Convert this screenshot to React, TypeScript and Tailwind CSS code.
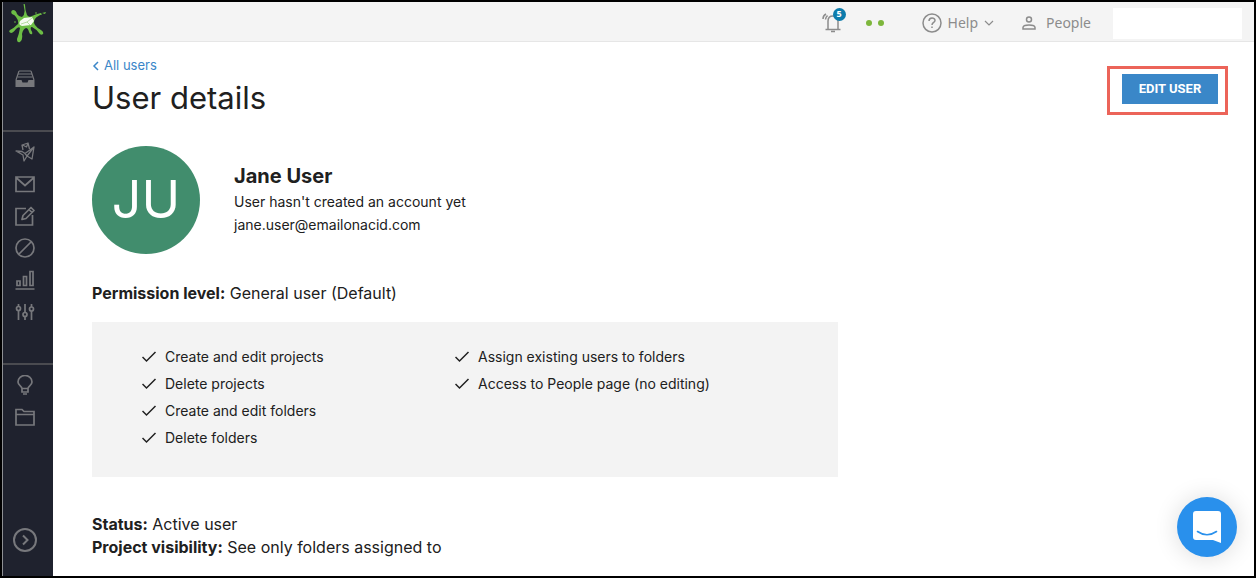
import React from 'react';

const generalPermissions = [
  'Create and edit projects',
  'Delete projects',
  'Create and edit folders',
  'Delete folders',
];

const peoplePermissions = [
  'Assign existing users to folders',
  'Access to People page (no editing)',
];

const Logo = () => (
  <svg viewBox="0 0 40 42" className="h-[42px] w-10" fill="#6cbd45" aria-hidden="true">
    <path d="M16.5 0 Q17.5 -1 18 1 Q18 6 20 11 Q22 14 25 12 Q29 10 34 9 L35 10.5 Q30 12 28 15 Q26 18 28 21 Q30 24 34 26 Q37 28 36 30 Q34 32 32 29 Q29 25 25 23 Q23 23 24 26 Q26 29 25 30 Q23 31 22 28 Q21 24 19 24 Q16 25 15 30 Q16 36 13 38 Q10 39 10 35 Q12 30 13 24 Q12 22 9 25 Q6 29 4 29 Q1 28 3 26 Q7 24 11 20 Q12 17 9 13 Q8 11 5 10 Q3 7 6 6 Q9 6 10 10 Q12 13 15 13 Q18 11 17.5 6 Z" />
    <path d="M35 9 L39 8 L38 10 Z" />
    <circle cx="29" cy="9" r="0.8" />
    <circle cx="8" cy="18" r="0.8" />
    <path d="M13 17 L17 14 L25 13 L27 17 L24 21 L15 22 Q11 21 13 17Z" fill="#f4fbef" />
    <path d="M14 20 L20 18 L25 14 M20 18 L23 21" fill="none" stroke="#a5d68c" strokeWidth="0.8" />
  </svg>
);

const Icon = ({ children }: { children: React.ReactNode }) => (
  <svg
    viewBox="0 0 20 20"
    className="h-5 w-5"
    fill="none"
    stroke="currentColor"
    strokeWidth="1.7"
    aria-hidden="true"
  >
    {children}
  </svg>
);

const NavItem = ({ label, children }: { label: string; children: React.ReactNode }) => (
  <a href="#" aria-label={label} className="flex h-8 items-center justify-center pr-1.5">
    <Icon>{children}</Icon>
  </a>
);

const Sidebar = () => (
  <nav aria-label="Main" className="flex w-[51px] shrink-0 flex-col border-l border-[#8e9094] bg-[#1f222e] text-[#77787c]">
    <a href="#" aria-label="Home" className="flex h-[46px] items-center pl-1">
      <Logo />
    </a>
    <div className="h-[84px] border-b-2 border-[#4a4b50] pt-[15px]">
      <NavItem label="Inbox">
        <path d="M4 2h12M3 5h14M2.5 8h15" strokeWidth="1.2" />
        <path d="M4 2L1 11M16 2l3 9" strokeWidth="1.2" />
        <path d="M0.5 11h6l1 2.5h5l1-2.5h6v7h-19z" fill="currentColor" stroke="none" />
      </NavItem>
    </div>
    <div className="border-b-2 border-[#4a4b50] pt-1 pb-[35px]">
      <NavItem label="Campaigns">
        <path d="M8 8L7 3l6-2 1.5 6M7.500 3l4 2 1.500-4M1 9l6 .5 3 2L19 5l-2 12-5-3-3 5-1-6zM10 11.500l2 2.500L19 5" strokeLinejoin="round" strokeWidth="1.3" />
      </NavItem>
      <NavItem label="Email">
        <path d="M1 3h18v14.500H1zM1 3.500l9 8 9-8" />
      </NavItem>
      <NavItem label="Editor">
        <path d="M11 2.500H1v16.500h16.500V9" />
        <path d="M7 13.500l1-4L16 1.500l3 3-8 8zM14 3.500l3 3" strokeLinejoin="round" />
      </NavItem>
      <NavItem label="Blocklist">
        <circle cx="10" cy="10" r="9" />
        <path d="M4 16L16 4" />
      </NavItem>
      <NavItem label="Analytics">
        <path d="M2 11h3v4.500H2zM8.500 6.500h3v9h-3zM15 1.500h3v14h-3zM0.500 19h19" />
      </NavItem>
      <NavItem label="Settings">
        <path d="M3.500 2v2.500M3.500 8.500V18M10 2v8.500M10 14.500V18M16.500 2v3M16.500 9v9" />
        <circle cx="3.500" cy="6.500" r="2" />
        <circle cx="10" cy="12.500" r="2" />
        <circle cx="16.500" cy="7" r="2" />
      </NavItem>
    </div>
    <div className="pt-1">
      <NavItem label="Tips">
        <path d="M7 13.500C7 11 3 10.500 3 7a7 6.500 0 0 1 14 0C17 10.500 13 11 13 13.500zM7 13.500V17h6v-3.500M8 19h4" />
      </NavItem>
      <NavItem label="Folders">
        <path d="M1 18V2.500h6l2 2h10V18zM1 7.500h18" />
      </NavItem>
    </div>
    <button type="button" aria-label="Expand menu" className="mt-auto mb-6 flex justify-center pr-1.5">
      <svg viewBox="0 0 24 24" className="h-6 w-6" fill="none" stroke="currentColor" strokeWidth="2" aria-hidden="true">
        <circle cx="12" cy="12" r="11" />
        <path d="M10 7.500l4.500 4.500-4.500 4.500" />
      </svg>
    </button>
  </nav>
);

const Header = () => (
  <header className="flex h-10 items-center justify-end border-b border-[#e6e6e6] bg-[#f4f4f4] pt-[3px] pr-3 font-['Noto_Sans',sans-serif] text-sm text-[#8c8c8c]">
    <button type="button" aria-label="Notifications" className="relative mr-5">
      <svg viewBox="0 0 24 22" className="h-[22px] w-6" fill="none" stroke="currentColor" strokeWidth="1.5" aria-hidden="true">
        <path d="M3.500 17.500h15M6 17V9c0-3.500 2-5 5-5s5 1.500 5 5v8M9 19.500h4M1 7c0-2 1-4 3-5M3.500 7.500c0-2 1-3 2-4" />
      </svg>
      <span className="absolute -top-1 right-0 flex h-[13px] w-[13px] items-center justify-center rounded-full bg-[#0d7cac] text-[9px] font-bold text-white">
        5
      </span>
    </button>
    <div className="mr-[38px] flex gap-1.5">
      <span className="h-1.5 w-1.5 rounded-full bg-[#7db63c]"></span>
      <span className="h-1.5 w-1.5 rounded-full bg-[#7db63c]"></span>
    </div>
    <button type="button" className="mr-7 flex items-center">
      <svg viewBox="0 0 20 20" className="mr-1.5 h-5 w-5" fill="none" stroke="currentColor" strokeWidth="1.5" aria-hidden="true">
        <circle cx="10" cy="10" r="9" />
        <path d="M7 8c0-4 6-4 6-.5 0 2-3 2-3 4.500M10 13.500v1.500" />
      </svg>
      Help
      <svg viewBox="0 0 10 6" className="ml-1.5 h-1.5 w-2.5" fill="none" stroke="currentColor" strokeWidth="1.2" aria-hidden="true">
        <path d="M1 1l4 4 4-4" />
      </svg>
    </button>
    <a href="#" className="mr-[22px] flex items-center">
      <svg viewBox="0 0 14 14" className="mr-2.5 h-3.5 w-3.5" fill="none" stroke="currentColor" strokeWidth="1.5" aria-hidden="true">
        <circle cx="7" cy="3.500" r="2.500" />
        <path d="M1 13v-1.500C1 8 13 8 13 11.500V13z" />
      </svg>
      People
    </a>
    <div className="h-[31px] w-[129px] bg-white"></div>
  </header>
);

const PermissionList = ({ items }: { items: string[] }) => (
  <ul>
    {items.map((item) => (
      <li key={item} className="flex h-[27px] items-center gap-2">
        <svg viewBox="0 0 15 12" className="h-3 w-[15px] shrink-0" fill="none" stroke="currentColor" strokeWidth="1.5" aria-hidden="true">
          <path d="M0.500 6L4.500 10 13.500 1" />
        </svg>
        {item}
      </li>
    ))}
  </ul>
);

const UserDetails = () => (
  <main className="pr-[26px] pl-[39px]">
    <div className="flex items-start justify-between pt-3.5">
      <div>
        <a href="#" className="flex h-5 items-center gap-1 text-[13px] text-[#3a86c8]">
          <svg viewBox="0 0 8 10" className="h-2.5 w-2" fill="none" stroke="currentColor" strokeWidth="1.5" aria-hidden="true">
            <path d="M6 1L2 5l4 4" />
          </svg>
          All users
        </a>
        <h1 className="mt-0.5 text-[31px] leading-10">User details</h1>
      </div>
      <div className="mt-2.5 border-[3px] border-[#ec6459] pt-[5px] pr-[7px] pb-2 pl-3">
        <button type="button" className="h-[30px] w-24 bg-[#3a87c8] font-[Roboto,sans-serif] text-[13px] font-bold text-white">
          EDIT USER
        </button>
      </div>
    </div>

    <div className="mt-7 flex items-center gap-[34px]">
      <div className="flex h-[108px] w-[108px] items-center justify-center rounded-full bg-[#418d6d] text-[52px] leading-none text-white">
        JU
      </div>
      <div className="pb-0.5">
        <h2 className="text-xl leading-7 font-bold">Jane User</h2>
        <p className="text-sm leading-[23px]">User hasn't created an account yet</p>
        <p className="text-sm leading-[23px]">jane.user@emailonacid.com</p>
      </div>
    </div>

    <p className="mt-7 text-base leading-[23px]">
      <strong>Permission level:</strong> General user (Default)
    </p>
    <div className="mt-[17px] grid h-[155px] max-w-[746px] grid-cols-[313px_1fr] bg-[#f3f3f3] pt-[21px] pl-[50px] text-sm">
      <PermissionList items={generalPermissions} />
      <PermissionList items={peoplePermissions} />
    </div>

    <div className="mt-9 text-base leading-[23px]">
      <p>
        <strong>Status:</strong> Active user
      </p>
      <p>
        <strong>Project visibility:</strong> See only folders assigned to
      </p>
    </div>
  </main>
);

const ChatButton = () => (
  <button
    type="button"
    aria-label="Open chat"
    className="fixed right-[19px] bottom-[21px] flex h-[60px] w-[60px] items-center justify-center rounded-full bg-[#2990ec] shadow-[0_1px_24px_rgba(0,0,0,0.14)]"
  >
    <svg viewBox="0 0 30 34" className="h-[34px] w-[30px]" aria-hidden="true">
      <path d="M4 1h22q3 0 3 3v29l-8-3H4q-3 0-3-3V4q0-3 3-3z" fill="#fff" />
      <path d="M5.500 21.500q9.500 6.500 19 0" fill="none" stroke="#2990ec" strokeWidth="1.6" strokeLinecap="round" />
    </svg>
  </button>
);

const App = () => {
  return (
    <div className="flex min-h-screen border-2 border-black bg-white font-[Inter,sans-serif] text-[#202020]">
      <Sidebar />
      <div className="min-w-0 flex-1">
        <Header />
        <UserDetails />
      </div>
      <ChatButton />
    </div>
  );
};

export default App;
